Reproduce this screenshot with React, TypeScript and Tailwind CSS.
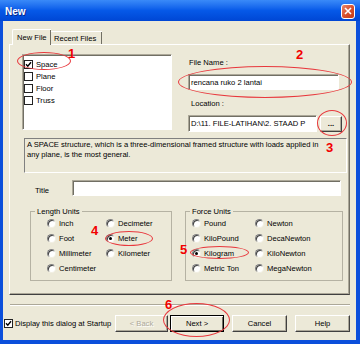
const sunken =
  "border border-t-[#ACA899] border-l-[#ACA899] border-b-white border-r-white shadow-[inset_1px_1px_0_#716F64]";
const raised =
  "border border-t-white border-l-white border-b-[#404040] border-r-[#404040] shadow-[inset_-1px_-1px_0_#ACA899]";

const Check = ({ on, dark }: { on?: boolean; dark?: boolean }) => (
  <span
    className={
      "w-[9px] h-[9px] shrink-0 bg-white flex items-center justify-center border " +
      (dark ? "border-[#222]" : "border-[#555]")
    }
  >
    {on && (
      <svg width="7" height="7" viewBox="0 0 7 7">
        <path d="M1 3.2 L2.8 5.2 L6 1.2" stroke="#000" strokeWidth="1.4" fill="none" />
      </svg>
    )}
  </span>
);

const Radio = ({ label, on }: { label: string; on?: boolean }) => (
  <div className="flex items-center h-[15px]">
    <span className="w-[9px] h-[9px] shrink-0 rounded-full bg-white border border-t-[#808080] border-l-[#808080] border-b-[#F1EFE2] border-r-[#F1EFE2] shadow-[inset_1px_1px_0_#404040] flex items-center justify-center">
      {on && <span className="w-[3px] h-[3px] rounded-full bg-black" />}
    </span>
    <span className="ml-[3px] whitespace-nowrap">{label}</span>
  </div>
);

const Btn = ({ label, w, disabled, def }: { label: string; w: string; disabled?: boolean; def?: boolean }) => (
  <div
    className={
      "h-[17px] flex items-center justify-center " +
      w +
      " " +
      (def ? "border border-black shadow-[inset_1px_1px_0_white,inset_-1px_-1px_0_#716F64]" : raised) +
      " " +
      (disabled ? "text-[#ACA899] [text-shadow:1px_1px_0_white]" : "text-black")
    }
  >
    {label}
  </div>
);

const Ellipse = ({ c }: { c: string }) => (
  <div className={"absolute rounded-[50%] border border-[#E8383D] pointer-events-none " + c} />
);

const Num = ({ n, c }: { n: string; c: string }) => (
  <div className={"absolute text-[13px] leading-none font-bold text-[#F20000] " + c}>{n}</div>
);

export default function App() {
  return (
    <div className="relative w-[360px] h-[344px] overflow-hidden bg-[#0B4FDB] flex flex-col font-['Liberation_Sans',Arial,sans-serif] text-[7.6px] leading-[9px] text-black">
      {/* title bar */}
      <div className="h-[21px] shrink-0 flex items-center justify-between pl-[5px] pr-[5px] bg-linear-to-b from-[#3A8AF8] via-[#0659E8] to-[#0046D4]">
        <span className="text-white font-bold text-[10px] leading-none mt-[3px] [text-shadow:1px_1px_0_#0A2A8A]">New</span>
        <div className="w-[14px] h-[15px] mt-[1px] rounded-[3px] border border-white bg-linear-to-br from-[#E8866A] via-[#D8512E] to-[#C33A17] flex items-center justify-center">
          <svg width="8" height="8" viewBox="0 0 8 8">
            <path d="M1 1 L7 7 M7 1 L1 7" stroke="white" strokeWidth="1.6" />
          </svg>
        </div>
      </div>

      {/* client area */}
      <div className="ml-[3px] mr-[4px] mb-[4px] flex-1 bg-[#ECE9D8] flex flex-col pt-[8px]">
        {/* tabs */}
        <div className="relative z-10 flex items-end ml-[9px] h-[16px]">
          <div className="w-[39px] h-[16px] bg-[#ECE9D8] border-t border-l border-white rounded-tl-[2px] shadow-[inset_-1px_0_0_#716F64] flex items-start pt-[3px] pl-[4px]">
            New File
          </div>
          <div className="w-[51px] h-[13px] mb-[1px] border-t border-white shadow-[inset_-1px_0_0_#716F64] flex items-start pt-[2px] pl-[3px]">
            Recent Files
          </div>
        </div>

        {/* panel */}
        <div className="-mt-[1px] ml-[6px] w-[341px] h-[251px] border border-t-white border-l-white border-b-[#404040] border-r-[#716F64] shadow-[inset_-1px_-1px_0_#ACA899] flex flex-col">
          <div className="flex mt-[9px]">
            {/* structure list */}
            <div className={"ml-[12px] w-[150px] h-[76px] bg-white pt-[3px] pl-[1px] " + sunken}>
              {["Space", "Plane", "Floor", "Truss"].map((t, i) => (
                <div key={t} className="flex items-center h-[12px]">
                  <Check on={i === 0} dark />
                  <span className="ml-[3px]">{t}</span>
                </div>
              ))}
            </div>

            {/* file name / location */}
            <div className="ml-[16px] w-[154px] flex flex-col">
              <div className="mt-[4px] pl-[1px]">File Name :</div>
              <div className={"mt-[7px] w-[151px] h-[16px] bg-white flex items-center pl-[2px] " + sunken}>
                rencana ruko 2 lantai
              </div>
              <div className="mt-[9px] pl-[3px]">Location :</div>
              <div className="mt-[7px] flex items-center h-[17px]">
                <div className={"w-[129px] h-[17px] bg-white flex items-center pl-[2px] overflow-hidden whitespace-nowrap " + sunken}>
                  {"D:\\11. FILE-LATIHAN\\2. STAAD P"}
                </div>
                <div className={"ml-[3px] w-[22px] h-[16px] flex items-center justify-center font-bold " + raised}>...</div>
              </div>
            </div>
          </div>

          {/* description */}
          <div className="mt-[6px] ml-[14px] w-[323px] h-[35px] border border-t-[#808080] border-l-[#808080] border-b-white border-r-white pt-[1px] pl-[2px] leading-[10px]">
            <div className="whitespace-nowrap">
              A SPACE structure, which is a three-dimensional framed structure with loads applied in
            </div>
            <div className="whitespace-nowrap">any plane, is the most general.</div>
          </div>

          {/* title */}
          <div className="mt-[7px] flex items-start">
            <div className="ml-[25px] w-[37px] pt-[6px]">Title</div>
            <div className={"w-[269px] h-[16px] bg-white " + sunken} />
          </div>

          {/* units */}
          <div className="mt-[11px] flex">
            <fieldset className="ml-[20px] w-[142px] h-[74px] border border-[#B5B2A3] p-0 m-0">
              <legend className="ml-[4px] px-[2px] leading-[9px]">Length Units</legend>
              <div className="grid grid-cols-[59px_auto] pl-[16px]">
                <Radio label="Inch" />
                <Radio label="Decimeter" />
                <Radio label="Foot" />
                <Radio label="Meter" on />
                <Radio label="Millimeter" />
                <Radio label="Kilometer" />
                <Radio label="Centimeter" />
              </div>
            </fieldset>
            <fieldset className="ml-[13px] w-[158px] h-[74px] border border-[#B5B2A3] p-0 m-0">
              <legend className="ml-[4px] px-[2px] leading-[9px]">Force Units</legend>
              <div className="grid grid-cols-[63px_auto] pl-[6px]">
                <Radio label="Pound" />
                <Radio label="Newton" />
                <Radio label="KiloPound" />
                <Radio label="DecaNewton" />
                <Radio label="Kilogram" on />
                <Radio label="KiloNewton" />
                <Radio label="Metric Ton" />
                <Radio label="MegaNewton" />
              </div>
            </fieldset>
          </div>
        </div>

        {/* separator */}
        <div className="mt-[9px] ml-[7px] w-[340px] h-[2px] border-t border-[#ACA899] border-b-white border-b" />

        {/* bottom row */}
        <div className="mt-[9px] flex items-center pl-[1px] pr-[6px]">
          <Check on dark />
          <span className="ml-[2px] whitespace-nowrap">Display this dialog at Startup</span>
          <div className="ml-auto flex items-center">
            <Btn label="< Back" w="w-[53px]" disabled />
            <div className="ml-[2px]">
              <Btn label="Next >" w="w-[54px]" def />
            </div>
            <div className="ml-[8px]">
              <Btn label="Cancel" w="w-[55px]" />
            </div>
            <div className="ml-[8px]">
              <Btn label="Help" w="w-[55px]" />
            </div>
          </div>
        </div>
      </div>

      {/* red annotations */}
      <Ellipse c="left-[17px] top-[52px] w-[54px] h-[18px]" />
      <Num n="1" c="left-[68px] top-[47px]" />
      <Ellipse c="left-[178px] top-[66px] w-[174px] h-[32px]" />
      <Num n="2" c="left-[296px] top-[48px]" />
      <Ellipse c="left-[317px] top-[110px] w-[30px] h-[26px]" />
      <Num n="3" c="left-[326px] top-[141px]" />
      <Ellipse c="left-[105px] top-[231px] w-[48px] h-[15px]" />
      <Num n="4" c="left-[91px] top-[224px]" />
      <Ellipse c="left-[190px] top-[246px] w-[59px] h-[13px]" />
      <Num n="5" c="left-[180px] top-[243px]" />
      <Ellipse c="left-[163px] top-[303px] w-[67px] h-[34px]" />
      <Num n="6" c="left-[165px] top-[298px]" />
    </div>
  );
}
